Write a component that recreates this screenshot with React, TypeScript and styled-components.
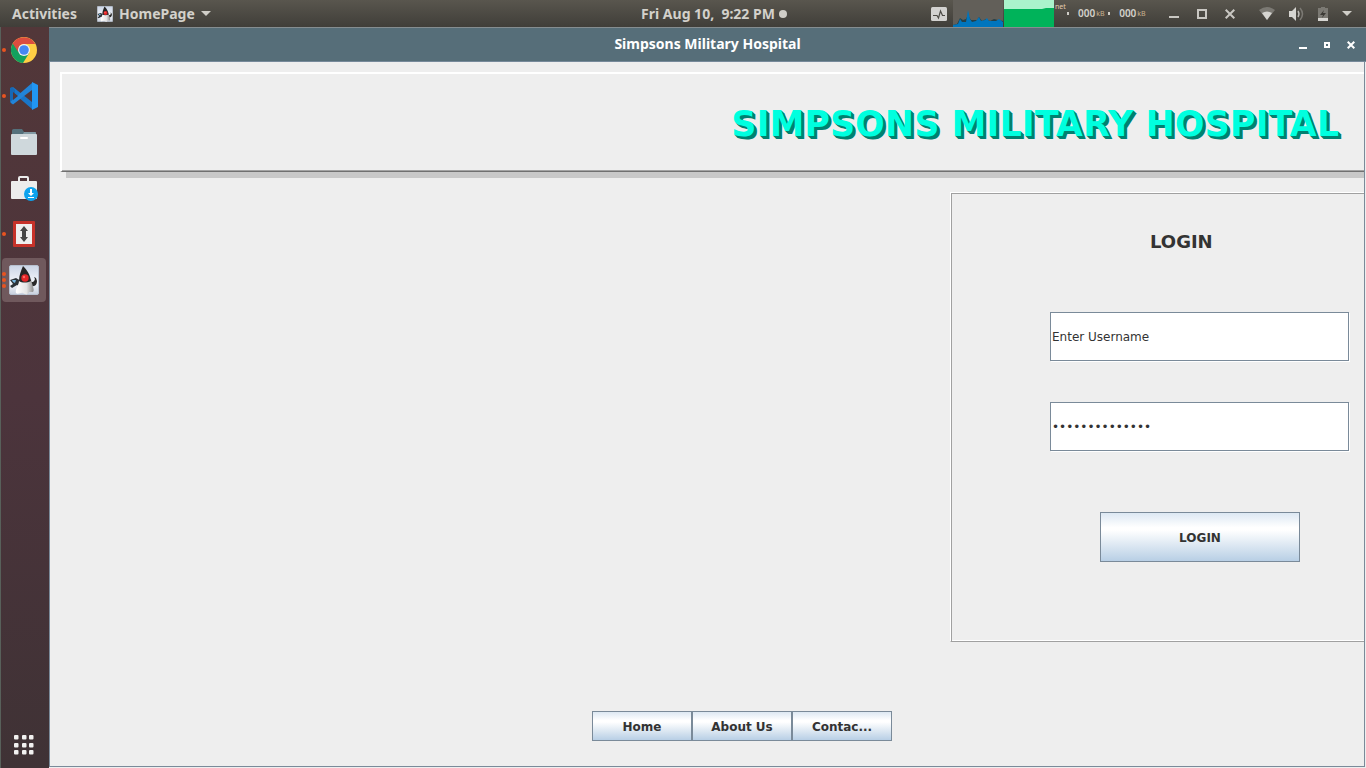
import React from "react";
import styled, { createGlobalStyle } from "styled-components";

const systemFont = '"Noto Sans", "Open Sans", sans-serif';
const swingFont = '"DejaVu Sans", sans-serif';

const GlobalStyle = createGlobalStyle`
  * { box-sizing: border-box; }
  body { margin: 0; background: #eeeeee; }
  button { font: inherit; color: inherit; cursor: pointer; }
  svg { display: block; }
`;

const Desktop = styled.div`
  display: flex;
  flex-direction: column;
  min-height: 100vh;
  font-family: ${systemFont};
`;

/* ---------- top panel ---------- */

const TopBar = styled.header`
  display: grid;
  grid-template-columns: 1fr auto 1fr;
  height: 27px;
  background: linear-gradient(#59564e, #403e39);
  color: #d3d1cb;
  font-size: 14px;
  font-weight: 700;
  line-height: 27px;
  white-space: nowrap;
`;

const BarGroup = styled.div<{ $end?: boolean }>`
  display: flex;
  align-items: center;
  justify-content: ${(p) => (p.$end ? "flex-end" : "flex-start")};
`;

const BarButton = styled.button<{ $pad: number }>`
  display: flex;
  align-items: center;
  gap: 6px;
  height: 27px;
  padding: 0 0 0 ${(p) => p.$pad}px;
  border: 0;
  background: none;
`;

const Clock = styled(BarButton)`
  gap: 4px;
  white-space: pre;
`;

const ClockDot = styled.span`
  width: 8px;
  height: 8px;
  border-radius: 50%;
  background: #d0cec8;
`;

const IconRow = styled.div<{ $gap: number; $right: number }>`
  display: flex;
  align-items: center;
  gap: ${(p) => p.$gap}px;
  padding-right: ${(p) => p.$right}px;
`;

const IconButton = styled.button`
  display: block;
  padding: 0;
  border: 0;
  background: none;
`;

const Graphs = styled.div`
  display: flex;
  gap: 1px;
  margin-left: 6px;
`;

const NetStats = styled.div`
  display: flex;
  align-items: center;
  width: 115px;
  height: 27px;
  padding-left: 1px;
  font-size: 10px;
  font-weight: 600;
`;

const NetLabel = styled.span`
  align-self: flex-start;
  width: 12px;
  color: #e3cdb0;
  font-size: 7px;
  font-weight: 400;
  line-height: 13px;
`;

const NetDot = styled.span`
  width: 2px;
  height: 3px;
  margin-right: 9px;
  background: #cfcdc7;
`;

const NetUnit = styled.span`
  width: 12px;
  margin-left: 1px;
  color: #c8b08e;
  font-size: 7px;
  font-weight: 400;
`;

/* ---------- launcher ---------- */

const Workspace = styled.div`
  display: flex;
  flex: 1;
`;

const Dock = styled.nav`
  display: flex;
  flex: none;
  flex-direction: column;
  width: 49px;
  padding-bottom: 13px;
  border-left: 1px solid #58605a;
  background: linear-gradient(#523739, #4c343c 50%, #3f3235);
`;

const Launcher = styled.button<{ $active?: boolean }>`
  display: grid;
  grid-template-columns: 7px 30px 7px;
  align-items: center;
  justify-items: center;
  width: 44px;
  height: 44px;
  margin: 1px;
  padding: 0;
  border: 0;
  border-radius: 4px;
  background: ${(p) => (p.$active ? "#70595d" : "transparent")};
`;

const Running = styled.span`
  display: grid;
  gap: 2px;
  justify-self: start;

  i {
    width: 4px;
    height: 4px;
    border-radius: 50%;
    background: #e95420;
  }
`;

const AppsButton = styled(IconButton)`
  margin: auto 0 0 13px;
`;

/* ---------- application window ---------- */

const Window = styled.section`
  display: flex;
  flex: 1;
  flex-direction: column;
  min-width: 0;
`;

const TitleBar = styled.div`
  display: grid;
  grid-template-columns: 1fr auto 1fr;
  align-items: center;
  height: 35px;
  border-top: 1px solid #858d90;
  border-bottom: 1px solid #76899a;
  background: #566e79;
  color: #ffffff;
  font-size: 14px;
  font-weight: 700;
`;

const TitleText = styled.span`
  grid-column: 2;
  padding-bottom: 2px;
`;

const TitleControls = styled(IconRow)`
  justify-content: flex-end;
`;

const Frame = styled.main`
  display: flex;
  flex: 1;
  flex-direction: column;
  margin: 0 1px 1px 0;
  padding: 10px 0 25px 10px;
  overflow: hidden;
  border: solid #7a8a99;
  border-width: 0 1px 1px;
  color: #333333;
  font-family: ${swingFont};
`;

const Banner = styled.div`
  display: flex;
  align-items: center;
  justify-content: flex-end;
  height: 100px;
  padding: 2px 25px 0 0;
  border-top: 2px solid #ffffff;
  border-left: 2px solid #ffffff;
  border-bottom: 1px solid #707070;
  box-shadow: inset 0 -1px 0 #a3a3a3, 6px 6px 0 #c8c8c8;
`;

const BannerTitle = styled.h1`
  margin: 0;
  color: #00ffdf;
  font-size: 35px;
  line-height: 42px;
  white-space: nowrap;
  text-shadow: 1px 1px 0 #008070, 2px 2px 0 #008070, 3px 3px 0 #008070;
`;

const LoginPanel = styled.form`
  display: flex;
  flex-direction: column;
  align-self: flex-end;
  width: 414px;
  height: 450px;
  margin-top: 20px;
  padding: 38px 14px 0 99px;
  border: solid #ffffff;
  border-width: 1px 0 0 1px;
  border-bottom: 1px solid #a0a0a0;
  box-shadow: inset 1px 1px 0 #a0a0a0, inset 0 -1px 0 #ffffff;
`;

const LoginHeading = styled.h2`
  margin: 0 0 60px 100px;
  font-size: 18px;
  line-height: 21px;
`;

const Field = styled.input`
  width: 299px;
  height: 49px;
  margin-bottom: 41px;
  padding: 0 1px;
  border: 1px solid #7a8a99;
  border-radius: 0;
  outline: 0;
  background: #ffffff;
  box-shadow: 1px 1px 0 #ffffff;
  color: #333333;
  font-family: ${swingFont};
  font-size: 12px;
`;

const SwingButton = styled.button`
  padding: 2px 0 0;
  border: 1px solid #7a8a99;
  background: linear-gradient(#dde8f3, #ffffff 30%, #ffffff 36%, #b8cfe5);
  font-size: 12px;
  font-weight: 700;
`;

const LoginButton = styled(SwingButton)`
  width: 200px;
  height: 50px;
  margin: 20px 0 0 50px;
`;

const PageNav = styled.nav`
  display: grid;
  grid-template-columns: repeat(3, 100px);
  justify-content: center;
  margin-top: auto;
  padding-left: 60px;
`;

const NavButton = styled(SwingButton)`
  height: 30px;
`;

/* ---------- drawings ---------- */

const Duke = ({ size }: { size: number }) => (
  <svg width={size} height={size} viewBox="0 0 30 30" aria-hidden="true">
    <defs>
      <linearGradient id="dukeSky" x1="0" y1="0" x2="0" y2="1">
        <stop offset="0" stopColor="#cbd5e6" />
        <stop offset="0.6" stopColor="#f4f6fa" />
        <stop offset="1" stopColor="#c8d0de" />
      </linearGradient>
      <linearGradient id="dukeBody" x1="0" y1="0" x2="1" y2="0">
        <stop offset="0" stopColor="#ffffff" />
        <stop offset="0.6" stopColor="#e4e4e4" />
        <stop offset="1" stopColor="#8c8c8c" />
      </linearGradient>
    </defs>
    <rect x="0.5" y="0.5" width="29" height="29" rx="1.5" fill="url(#dukeSky)" stroke="#b7c1d0" />
    <path d="M1 15l6-2 5 3 2-3v7l-4 1-2-1-5 3-2-2 3-2z" fill="#2c3338" />
    <path d="M3 15l4 0-1 3-2-1z" fill="#77b7df" />
    <path d="M20 14c3 5 5 3 6 0l-1-2 2 1 1 3c0 5-4 6-7 5z" fill="#292929" />
    <path d="M10 16c0 4-4 8-3 12 2 2 5-1 7 0 3 2 5 2 6-1l4 0c2-2-1-7-2-13z" fill="url(#dukeBody)" />
    <path d="M14 1c-2 5-4 9-4 15 3 2 8 2 12 0-1-7-4-11-8-15z" fill="#262626" />
    <circle cx="16" cy="13" r="3.700" fill="#e32628" />
    <circle cx="15" cy="12" r="1.200" fill="#ff6a62" />
  </svg>
);

const Chrome = () => (
  <svg width="26" height="26" viewBox="0 0 26 26" aria-hidden="true">
    <circle cx="13" cy="13" r="13" fill="#ffce44" />
    <path d="M13 13L1.7 6.5A13 13 0 0 0 12 26l6.2-10z" fill="#12a15e" />
    <path d="M1.7 6.5A13 13 0 0 1 24.3 7H13a6 6 0 0 0-5.4 8.4z" fill="#dc4d3f" />
    <circle cx="13" cy="13" r="6" fill="#f1f1f1" />
    <circle cx="13" cy="13" r="4.8" fill="#4587f4" />
  </svg>
);

const Code = () => (
  <svg width="28" height="28" viewBox="0 0 28 28" aria-hidden="true">
    <path d="M0 7l3-2 19 15v7L0 8z" fill="#1976c9" />
    <path d="M0 19V6l2-1 3 3v9l-3 5z" fill="#1668b6" />
    <path d="M0 20L22 1v7L3 22.500z" fill="#2284d8" />
    <path d="M3 10l5 4-5 4z" fill="#50373a" />
    <path d="M22 0l6 3v22l-6 3z" fill="#2196f3" />
  </svg>
);

const Folder = () => (
  <svg width="26" height="26" viewBox="0 0 26 26" aria-hidden="true">
    <path d="M1 6V1.500Q1 0 2.500 0H11l2 3h11q1 0 1 1v3z" fill="#54707b" />
    <path d="M13 3h11q1 0 1 1v3H11z" fill="#829aa4" />
    <rect y="5" width="26" height="21" rx="1" fill="#cfd8dc" />
    <rect x="9" y="8" width="8" height="2" rx="1" fill="#ffffff" />
  </svg>
);

const Software = () => (
  <svg width="28" height="26" viewBox="0 0 28 26" aria-hidden="true">
    <path d="M9 7V3q0-1 1-1h7q1 0 1 1v4" fill="none" stroke="#ececec" strokeWidth="2" />
    <rect x="1" y="6" width="26" height="18" rx="1" fill="#ececec" />
    <circle cx="21" cy="19" r="7" fill="#0da3ee" />
    <path d="M20 14h2v4h2l-3 3-3-3h2zM18 22h6v1h-6z" fill="#ffffff" />
  </svg>
);

const Transfer = () => (
  <svg width="22" height="26" viewBox="0 0 22 26" aria-hidden="true">
    <rect width="22" height="26" rx="1" fill="#c6322a" />
    <rect x="3" y="3" width="16" height="20" fill="#eeeeee" />
    <path d="M11 5l4 5h-2v6h2l-4 5-4-5h2v-6H7z" fill="#454545" />
  </svg>
);

const AppsGrid = () => (
  <svg width="20" height="20" viewBox="0 0 20 20" fill="#f2f1f0" aria-hidden="true">
    {[0, 8, 15].map((y) => [0, 8, 15].map((x) => (
      <rect key={`${x}-${y}`} x={x} y={y} width="4.500" height="4.500" rx="1" />
    )))}
  </svg>
);

const DownArrow = () => (
  <svg width="10" height="5" viewBox="0 0 10 5" aria-hidden="true">
    <path d="M0 0h10L5 5z" fill="#d0cec8" />
  </svg>
);

const Pulse = () => (
  <svg width="16" height="14" viewBox="0 0 16 14" aria-hidden="true">
    <rect width="16" height="14" rx="1.500" fill="#d3d2d0" />
    <path d="M2 8.500h4l1.500 2.500L9.500 4l2 4.500H14" fill="none" stroke="#4c4a45" strokeWidth="1.200" />
  </svg>
);

const CpuGraph = () => (
  <svg width="50" height="27" viewBox="0 0 50 27" aria-hidden="true">
    <rect width="50" height="27" fill="#625f59" />
    <path d="M0 25l4-1 3-6 3 2 3-1 2-4 3 5 6 0 2-3 3 4 4-2 4 2 4-2 4 1 5 1v6H0z" fill="#264047" />
    <path d="M0 27v-2l5-1 2-5 2 3h4l2-12 2 9 2 3 4-1 3-4 2 4 4-1 2-2 2 3h7l3-2 4 3v5z" fill="#0075bd" />
  </svg>
);

const MemoryGraph = () => (
  <svg width="50" height="27" viewBox="0 0 50 27" aria-hidden="true">
    <rect width="50" height="27" fill="#aaf3cc" />
    <path d="M0 9h38l4-1h8v19H0z" fill="#00b35a" />
  </svg>
);

const Wifi = () => (
  <svg width="16" height="13" viewBox="0 0 16 13" aria-hidden="true">
    <path d="M0 3Q8-3 16 3L8 13z" fill="#7b7973" />
    <path d="M3 6Q8 3 13 6l-5 7z" fill="#d6d5d1" />
  </svg>
);

const Speaker = () => (
  <svg width="15" height="14" viewBox="0 0 15 14" aria-hidden="true">
    <path d="M0 4h3l4-4v14l-4-4H0z" fill="#d6d5d1" />
    <path d="M9 4q2 3 0 6" fill="none" stroke="#bdbbb6" strokeWidth="1.400" />
    <path d="M11 1q5 6 0 12" fill="none" stroke="#7b7973" strokeWidth="1.500" />
  </svg>
);

const Battery = () => (
  <svg width="10" height="14" viewBox="0 0 10 14" aria-hidden="true">
    <path d="M0 1h3V0h4v1h3v13H0z" fill="#7b7973" />
    <path d="M0 11h10v3H0z" fill="#d6d5d1" />
    <path d="M6 3L2 8h3l-1 3 4-5H5z" fill="#3b3934" />
  </svg>
);

type ControlKind = "min" | "max" | "close";

const BarControl = ({ kind }: { kind: ControlKind }) => (
  <svg width="10" height="10" viewBox="0 0 10 10" fill="none" stroke="#c9c7c2" strokeWidth="2" aria-hidden="true">
    {kind === "min" && <path d="M0 8h10" />}
    {kind === "max" && <path d="M1 1h8v8H1z" />}
    {kind === "close" && <path d="M0.700 0.700l8.600 8.600M9.300 0.700L0.700 9.300" />}
  </svg>
);

const WindowControl = ({ kind }: { kind: ControlKind }) => (
  <svg width="8" height="8" viewBox="0 0 8 8" fill="none" stroke="#ffffff" strokeWidth="2" aria-hidden="true">
    {kind === "min" && <path d="M0 7h8" />}
    {kind === "max" && <path d="M2 2h4v4H2z" />}
    {kind === "close" && <path d="M0.700 0.700l6.600 6.600M7.300 0.700L0.700 7.300" />}
  </svg>
);

const controls: { kind: ControlKind; label: string }[] = [
  { kind: "min", label: "Minimize" },
  { kind: "max", label: "Maximize" },
  { kind: "close", label: "Close" },
];

const launchers = [
  { name: "Chrome", icon: <Chrome />, windows: 1 },
  { name: "Code", icon: <Code />, windows: 1 },
  { name: "Files", icon: <Folder />, windows: 0 },
  { name: "Software", icon: <Software />, windows: 0 },
  { name: "Transfer", icon: <Transfer />, windows: 1 },
  { name: "HomePage", icon: <Duke size={30} />, windows: 3, active: true },
];

export default function App() {
  return (
    <Desktop>
      <GlobalStyle />
      <TopBar>
        <BarGroup>
          <BarButton $pad={12}>Activities</BarButton>
          <BarButton $pad={20}>
            <Duke size={16} />
            HomePage
            <DownArrow />
          </BarButton>
        </BarGroup>
        <Clock $pad={62}>
          {"Fri Aug 10,  9:22 PM"}
          <ClockDot />
        </Clock>
        <BarGroup $end>
          <Pulse />
          <Graphs>
            <CpuGraph />
            <MemoryGraph />
          </Graphs>
          <NetStats>
            <NetLabel>net</NetLabel>
            <NetDot />
            000<NetUnit>kB</NetUnit>
            <NetDot />
            000<NetUnit>kB</NetUnit>
          </NetStats>
          <IconRow $gap={18} $right={24}>
            {controls.map((c) => (
              <IconButton key={c.kind} aria-label={c.label}>
                <BarControl kind={c.kind} />
              </IconButton>
            ))}
          </IconRow>
          <IconRow $gap={14} $right={14}>
            <Wifi />
            <Speaker />
            <Battery />
            <DownArrow />
          </IconRow>
        </BarGroup>
      </TopBar>
      <Workspace>
        <Dock>
          {launchers.map((l) => (
            <Launcher key={l.name} aria-label={l.name} $active={l.active}>
              <Running>
                {Array.from({ length: l.windows }, (_, i) => <i key={i} />)}
              </Running>
              {l.icon}
            </Launcher>
          ))}
          <AppsButton aria-label="Show applications">
            <AppsGrid />
          </AppsButton>
        </Dock>
        <Window>
          <TitleBar>
            <TitleText>Simpsons Military Hospital</TitleText>
            <TitleControls $gap={16} $right={11}>
              {controls.map((c) => (
                <IconButton key={c.kind} aria-label={c.label}>
                  <WindowControl kind={c.kind} />
                </IconButton>
              ))}
            </TitleControls>
          </TitleBar>
          <Frame>
            <Banner>
              <BannerTitle>SIMPSONS MILITARY HOSPITAL</BannerTitle>
            </Banner>
            <LoginPanel onSubmit={(e) => e.preventDefault()}>
              <LoginHeading>LOGIN</LoginHeading>
              <Field type="text" aria-label="Username" defaultValue="Enter Username" />
              <Field type="password" aria-label="Password" defaultValue="Enter Password" />
              <LoginButton type="submit">LOGIN</LoginButton>
            </LoginPanel>
            <PageNav>
              <NavButton>Home</NavButton>
              <NavButton>About Us</NavButton>
              <NavButton>Contac...</NavButton>
            </PageNav>
          </Frame>
        </Window>
      </Workspace>
    </Desktop>
  );
}
